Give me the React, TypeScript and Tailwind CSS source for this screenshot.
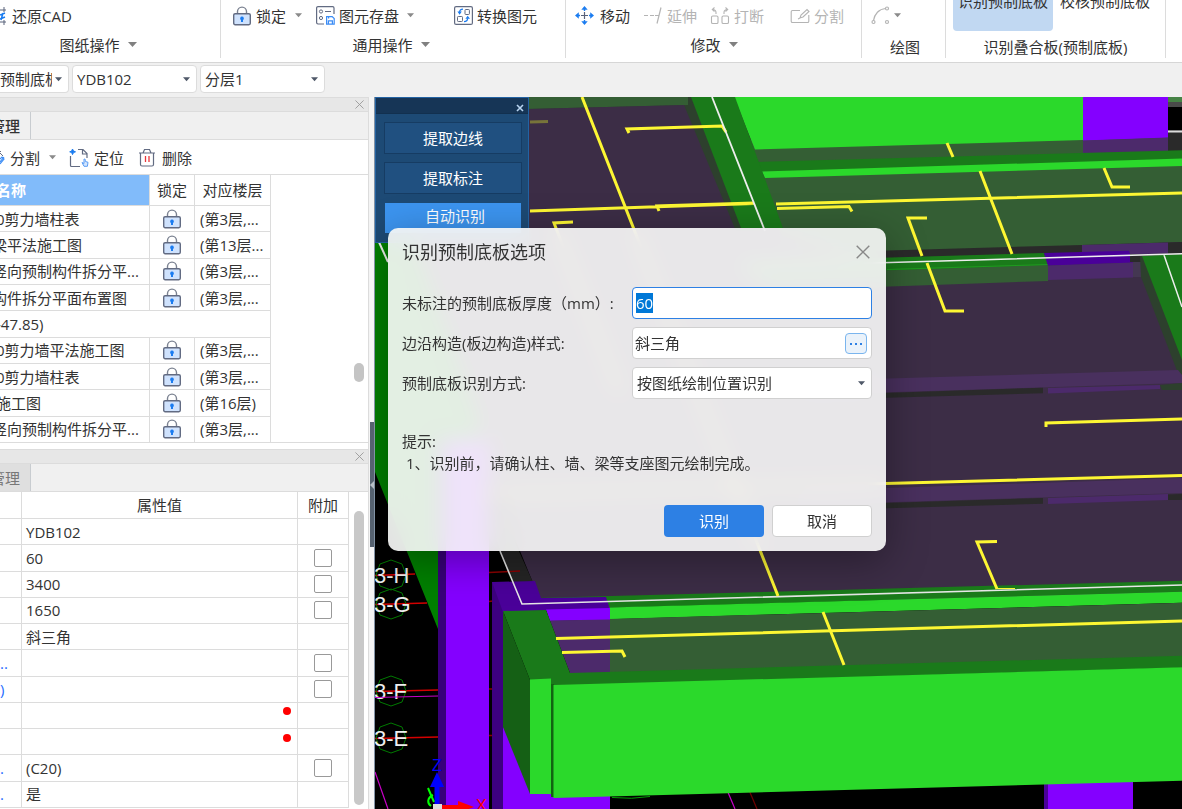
import { useEffect, useRef } from "react";
import type { ReactNode } from "react";

type IconProps = {
    className?: string;
};

const Caret = ({ className = "text-[#8a8a8a]" }: IconProps) => (
    <svg viewBox="0 0 8 5" className={`w-[7px] h-[5px] shrink-0 ${className}`}>
        <path d="M0 0h8L4 4.6z" fill="currentColor" />
    </svg>
);

const Close = ({ className = "w-[9px] h-[9px] text-[#999]" }: IconProps) => (
    <svg viewBox="0 0 10 10" className={className}>
        <path d="M.5.5l9 9M9.5.5l-9 9" stroke="currentColor" fill="none" />
    </svg>
);

const LockIcon = () => (
    <svg viewBox="0 0 18 20" className="w-[18px] h-5 shrink-0" fill="none">
        <path d="M4.5 8V5.6a4.5 4.5 0 0 1 9 0V8" stroke="#7b8291" strokeWidth="1.4" />
        <rect x=".7" y="7.7" width="16.6" height="11" rx="1.4" fill="#cfe2fd" stroke="#626b82" strokeWidth="1.4" />
        <path d="M9 10.6a1.9 1.9 0 0 1 1 3.5V16H8v-1.9a1.9 1.9 0 0 1 1-3.5z" fill="#1b7cf0" />
    </svg>
);

const RestoreIcon = () => (
    <svg viewBox="0 0 7 18" className="w-[7px] h-[18px] shrink-0" fill="none">
        <path d="M0 3h6M4 0v5M0 15h6M4 13v5" stroke="#59627a" />
        <path d="M0 8l5-2M0 12l5-2M3 6L1 13" stroke="#1b7cf0" strokeWidth="1.6" />
    </svg>
);

const SaveGraphIcon = () => (
    <svg viewBox="0 0 19 19" className="w-[19px] h-[19px] shrink-0" fill="none">
        <path d="M18 8V2a1.4 1.4 0 0 0-1.4-1.4H2A1.4 1.4 0 0 0 .6 2v14.6A1.4 1.4 0 0 0 2 18h6" stroke="#626b82" strokeWidth="1.2" />
        <circle cx="5" cy="5.5" r="1.6" stroke="#626b82" />
        <circle cx="5" cy="12" r="1.6" stroke="#626b82" />
        <path d="M9 5.5h6" stroke="#626b82" />
        <path d="M10.6 10.6h5.6l2 2v5.6h-7.6zM12.4 18v-3.2h4V18M12.6 11v1.6" stroke="#3b8cf5" strokeWidth="1.2" />
    </svg>
);

const ConvertIcon = () => (
    <svg viewBox="0 0 19 19" className="w-[19px] h-[19px] shrink-0" fill="none">
        <rect x=".6" y=".6" width="17.8" height="17.8" rx="1.5" stroke="#626b82" strokeWidth="1.2" />
        <rect x="11" y="3.5" width="4.4" height="5" rx=".8" stroke="#626b82" />
        <rect x="3.5" y="10.5" width="5" height="5" rx=".8" stroke="#626b82" />
        <path d="M9 3.2C6.6 3.2 5.6 4.4 5.6 6.4M10 15.6c2.4 0 3.6-1.2 3.6-3.4" stroke="#1b7cf0" strokeWidth="1.3" />
        <path d="M3.4 5.6h4.4L5.6 8.8zM11.4 12.8h4.6L13.7 9.8z" fill="#1b7cf0" />
    </svg>
);

const MoveIcon = () => (
    <svg viewBox="0 0 19 19" className="w-[19px] h-[19px] shrink-0">
        <path d="M9.5 6v7M6 9.5h7" stroke="#59627a" strokeWidth="1.2" />
        <path d="M9.5 2v3M9.5 14v3M2 9.5h3M14 9.5h3" stroke="#1b7cf0" strokeWidth="1.4" />
        <path d="M9.5 0l3.2 3.8H6.3zM9.5 19l3.2-3.8H6.3zM0 9.5l3.8-3.2v6.4zM19 9.5l-3.8-3.2v6.4z" fill="#1b7cf0" />
    </svg>
);

const ExtendIcon = () => (
    <svg viewBox="0 0 20 19" className="w-5 h-[19px] shrink-0">
        <path d="M1 9.5h4M7 9.5h4M12 9.5h4M14 17.5l4-16" stroke="#b4b4b4" strokeWidth="1.2" fill="none" />
    </svg>
);

const BreakIcon = () => (
    <svg viewBox="0 0 20 19" className="w-5 h-[19px] shrink-0" fill="none" stroke="#b4b4b4" strokeWidth="1.1">
        <rect x="1.5" y="10" width="6.5" height="7.5" rx="1.3" />
        <rect x="12" y="10" width="6.5" height="7.5" rx="1.3" />
        <path d="M6 8V6.5C6 4.5 5 3.5 2.5 3.5M4.5 1.5l-2.2 2 2.2 2M14 8V6.5c0-2 1-3 3.5-3M15.500 1.500l2.200 2-2.200 2" />
    </svg>
);

const SplitIcon = () => (
    <svg viewBox="0 0 20 19" className="w-5 h-[19px] shrink-0" fill="none" stroke="#b4b4b4" strokeWidth="1.1">
        <path d="M10 4.5H2.500A1.300 1.300 0 0 0 1.200 5.800v9.400a1.300 1.300 0 0 0 1.300 1.300h15a1.300 1.300 0 0 0 1.300-1.300V9" />
        <path d="M10 12l1-3 6-5.500 2 2-6 5.500zM8 13l2-1" />
    </svg>
);

const ArcIcon = () => (
    <svg viewBox="0 0 19 19" className="w-[19px] h-[19px] shrink-0" fill="none" stroke="#b4b4b4" strokeWidth="1.2">
        <circle cx="2.5" cy="16" r="1.5" />
        <circle cx="16" cy="16" r="1.5" />
        <circle cx="16" cy="2.5" r="1.5" />
        <path d="M2.5 14.5C3.5 8 8 3 14.5 2.5" />
    </svg>
);

const CutIcon = () => (
    <svg viewBox="0 0 5 16" className="w-[5px] h-4 shrink-0" fill="none">
        <path d="M0 3l3 3M0 2l1-1" stroke="#626b82" />
        <path d="M0 12l4-5M0 9l2-2 2 2-4 5" stroke="#3b8cf5" strokeWidth="1.2" />
    </svg>
);

const LocateIcon = () => (
    <svg viewBox="0 0 20 20" className="w-5 h-5 shrink-0" fill="none">
        <path d="M9 1.5h5l4 4V10M13.5 1.5V6H18M1.5 8v9.5a1 1 0 0 0 1 1H11" stroke="#626b82" strokeWidth="1.2" />
        <path d="M3.5 1l1 2 2 .8-2 .8-1 2-.8-2-2-.8 2-.8z" fill="#1b7cf0" stroke="#1b7cf0" />
        <path d="M13 14.5l2 1V11c1.500-.5 1.500 1.500 1.500 2.500l2.500.8-.6 4h-3.400z" fill="#d3e5fd" stroke="#5a9df5" />
    </svg>
);

const TrashIcon = () => (
    <svg viewBox="0 0 17 19" className="w-5 h-[19px] shrink-0" fill="none">
        <path d="M.5 5h16M4.5 5l1.5-3.5h5L12.5 5M2 5v11.500A1.500 1.500 0 0 0 3.500 18h10a1.500 1.500 0 0 0 1.500-1.500V5" stroke="#626b82" strokeWidth="1.2" />
        <path d="M7 8v6M10.500 8v6" stroke="#e8363b" strokeWidth="1.3" />
    </svg>
);

type ToolProps = {
    icon: ReactNode;
    label?: string;
    caret?: boolean;
    disabled?: boolean;
    gap?: string;
};

const Tool = ({ icon, label, caret, disabled, gap = "gap-1" }: ToolProps) => (
    <button type="button" disabled={disabled} className={`flex items-center disabled:text-[#b4b4b4] ${gap}`}>
        {icon}
        {label}
        {caret && <Caret className="ml-1 text-[#8a8a8a]" />}
    </button>
);

type GroupProps = {
    label: string;
    caret?: boolean;
    className: string;
    labelClass?: string;
    children: ReactNode;
};

const Group = ({ label, caret, className, labelClass = "", children }: GroupProps) => (
    <section className={`h-[58px] shrink-0 border-r border-[#dcdcdc] flex flex-col ${className}`}>
        <div className="h-[31px] flex items-center">{children}</div>
        <div className={`flex-1 flex items-center justify-center gap-2 ${labelClass}`}>
            {label}
            {caret && (
                <svg viewBox="0 0 9 5" className="w-[9px] h-[5px]">
                    <path d="M0 0h9L4.5 5z" fill="#808080" />
                </svg>
            )}
        </div>
    </section>
);

const Ribbon = () => (
    <header className="h-[63px] shrink-0 flex border-b border-[#d6d6d6] bg-white">
        <Group label="图纸操作" caret className="w-[221px]" labelClass="pr-6">
            <Tool icon={<RestoreIcon />} label="还原CAD" gap="gap-[5px]" />
        </Group>
        <Group label="通用操作" caret className="w-[345px] pl-3" labelClass="pr-4">
            <div className="flex gap-[14px]">
                <Tool icon={<LockIcon />} label="锁定" caret gap="gap-[5px]" />
                <Tool icon={<SaveGraphIcon />} label="图元存盘" caret />
            </div>
            <div className="ml-10">
                <Tool icon={<ConvertIcon />} label="转换图元" />
            </div>
        </Group>
        <Group label="修改" caret className="w-[296px] pl-[9px]" labelClass="pr-2">
            <div className="flex gap-[13px]">
                <Tool icon={<MoveIcon />} label="移动" gap="gap-[6px]" />
                <Tool icon={<ExtendIcon />} label="延伸" disabled />
                <Tool icon={<BreakIcon />} label="打断" disabled />
            </div>
            <div className="ml-[26px]">
                <Tool icon={<SplitIcon />} label="分割" disabled />
            </div>
        </Group>
        <Group label="绘图" className="w-[84px] pl-[9px]" labelClass="pt-1 pr-[6px]">
            <Tool icon={<ArcIcon />} caret disabled gap="gap-0" />
        </Group>
        <Group label="识别叠合板(预制底板)" className="w-[220px] px-[7px]" labelClass="pt-1">
            <div className="flex gap-[7px] h-full">
                <button type="button" className="w-[100px] rounded-b bg-[#c1d8f2] pb-[25px] flex items-end justify-center whitespace-nowrap">
                    <span className="h-4 leading-[22px]">识别预制底板</span>
                </button>
                <button type="button" className="pb-[25px] flex items-end whitespace-nowrap">
                    <span className="h-4 leading-[22px]">校核预制底板</span>
                </button>
            </div>
        </Group>
    </header>
);

type ComboProps = {
    name: string;
    value: string;
    className: string;
    selectClass?: string;
};

const Combo = ({ name, value, className, selectClass = "pl-1" }: ComboProps) => (
    <div className={`relative flex items-center bg-white border border-[#dcdcdc] rounded ${className}`}>
        <select aria-label={name} className={`appearance-none w-full h-full pr-4 bg-transparent outline-none ${selectClass}`}>
            <option>{value}</option>
        </select>
        <Caret className="absolute right-[6px] pointer-events-none text-[#4f5868]" />
    </div>
);

const SelectorBar = () => (
    <div className="h-[34px] shrink-0 flex items-center gap-[3px] pb-[2px] bg-[#f0f0f0]">
        <Combo name="构件类型" value="预制底板" className="w-[69px] h-7 rounded-l-none border-l-0" selectClass="pl-0" />
        <Combo name="构件" value="YDB102" className="w-[125px] h-7" />
        <Combo name="分层" value="分层1" className="w-[125px] h-7" />
    </div>
);

const PanelHead = ({ active }: { active?: boolean }) => (
    <>
        <div className="h-[15px] shrink-0 flex items-center justify-end pr-1 bg-[#e7e7e7] border-y border-[#dcdcdc]">
            <button type="button" aria-label="关闭">
                <Close />
            </button>
        </div>
        <div className="h-7 shrink-0 flex bg-[#f0f0f0] border-b border-[#dcdcdc]">
            <button
                type="button"
                className={`w-[31px] flex items-center justify-end pr-[10px] whitespace-nowrap overflow-hidden border-r ${
                    active ? "font-medium border-[#c8ccd0]" : "bg-[#dfdfdf] text-[#777] border-[#c8ccd0]"
                }`}
            >
                管理
            </button>
        </div>
    </>
);

const drawings = [
    { name: "0剪力墙柱表", floor: "(第3层,...", indent: "-indent-1" },
    { name: "梁平法施工图", floor: "(第13层...", indent: "-indent-2" },
    { name: "竖向预制构件拆分平...", floor: "(第3层,...", indent: "-indent-2" },
    { name: "构件拆分平面布置图", floor: "(第3层,...", indent: "-indent-2" },
    { name: "-47.85)", floor: "", indent: "-indent-1" },
    { name: "0剪力墙平法施工图", floor: "(第3层,...", indent: "-indent-1" },
    { name: "0剪力墙柱表", floor: "(第3层,...", indent: "-indent-1" },
    { name: "施工图", floor: "(第16层)", indent: "-indent-1" },
    { name: "竖向预制构件拆分平...", floor: "(第3层,...", indent: "-indent-2" },
];

const DrawingPanel = () => (
    <section className="h-[346px] shrink-0 flex flex-col border-b border-[#dcdcdc]">
        <PanelHead active />
        <div className="h-[35px] shrink-0 flex items-center gap-[13px] pt-px border-b border-[#dcdcdc]">
            <Tool icon={<CutIcon />} label="分割" caret gap="gap-[5px]" />
            <Tool icon={<LocateIcon />} label="定位" gap="gap-[5px]" />
            <Tool icon={<TrashIcon />} label="删除" gap="gap-[5px]" />
        </div>
        <div className="flex-1 flex justify-between overflow-hidden">
            <table className="w-[271px] h-[268px] table-fixed border-separate border-spacing-0 whitespace-nowrap [&_td]:border-r [&_td]:border-b [&_td]:border-[#dcdcdc] [&_th]:border-r [&_th]:border-b [&_th]:border-[#dcdcdc]">
                <thead>
                    <tr className="h-[31px]">
                        <th className="w-[150px] p-0 text-left font-bold text-white bg-[#81bbfa] -indent-1">名称</th>
                        <th className="w-[45px] p-0 font-normal">锁定</th>
                        <th className="w-[76px] p-0 font-normal">对应楼层</th>
                    </tr>
                </thead>
                <tbody className="leading-[22px]">
                    {drawings.map((d, i) =>
                        d.floor ? (
                            <tr key={i}>
                                <td className={`p-0 ${d.indent}`}>{d.name}</td>
                                <td className="p-0">
                                    <div className="flex justify-center">
                                        <LockIcon />
                                    </div>
                                </td>
                                <td className="p-0 pl-[5px]">{d.floor}</td>
                            </tr>
                        ) : (
                            <tr key={i}>
                                <td colSpan={3} className={`p-0 ${d.indent}`}>
                                    {d.name}
                                </td>
                            </tr>
                        )
                    )}
                </tbody>
            </table>
            <div className="pr-1 pt-[188px]">
                <div className="w-[10px] h-[19px] rounded-full bg-[#c4c4c4]" />
            </div>
        </div>
    </section>
);

const props = [
    { key: "", value: "YDB102" },
    { key: "", value: "60", check: true },
    { key: "", value: "3400", check: true },
    { key: "", value: "1650", check: true },
    { key: "", value: "斜三角" },
    { key: "...", value: "", check: true },
    { key: ")", value: "", check: true },
    { key: "", value: "", dot: true },
    { key: "", value: "", dot: true },
    { key: ".", value: "(C20)", check: true },
    { key: ".", value: "是" },
];

const PropertyPanel = () => (
    <section className="flex-1 flex flex-col overflow-hidden">
        <PanelHead />
        <div className="flex-1 flex items-start justify-between">
            <table className="w-[349px] h-[316px] table-fixed border-separate border-spacing-0 [&_td]:border-r [&_td]:border-b [&_td]:border-[#dcdcdc] [&_th]:border-r [&_th]:border-b [&_th]:border-[#dcdcdc]">
                <thead>
                    <tr className="h-[27px]">
                        <th className="w-[22px] p-0" aria-label="属性" />
                        <th className="w-[276px] p-0 font-normal">属性值</th>
                        <th className="w-[51px] p-0 font-normal">附加</th>
                    </tr>
                </thead>
                <tbody>
                    {props.map((p, i) => (
                        <tr key={i}>
                            <td className={`p-0 text-[#1f6dff] ${p.key.length > 1 ? "-indent-1" : ""}`}>{p.key}</td>
                            <td className="p-0 px-1">
                                {p.dot ? (
                                    <div className="h-[22px] pt-[3px] pr-[2px] flex items-start justify-end">
                                        <span className="w-2 h-2 rounded-full bg-[#ff0000]" />
                                    </div>
                                ) : (
                                    <div className="h-[22px]">{p.value}</div>
                                )}
                            </td>
                            <td className="p-0">
                                {p.check && (
                                    <input
                                        type="checkbox"
                                        aria-label={`附加 ${p.value}`}
                                        className="appearance-none block mx-auto w-[18px] h-[18px] border border-[#999] rounded-[2px] bg-white"
                                    />
                                )}
                            </td>
                        </tr>
                    ))}
                </tbody>
            </table>
            <div className="pr-1 pt-[19px]">
                <div className="w-[10px] h-[294px] rounded-full bg-[#c8c8c8]" />
            </div>
        </div>
    </section>
);

const axes = [
    { label: "3-H", y: 575, end: 415 },
    { label: "3-G", y: 604, end: 427 },
    { label: "3-F", y: 691, end: 438 },
    { label: "3-E", y: 738, end: 438 },
];

// Model view: slabs, beams and columns drawn back to front
const Scene = () => (
    <svg className="absolute inset-0 w-full h-full" viewBox="375 97 807 712" preserveAspectRatio="xMinYMin slice" fill="none">
        <rect x="375" y="97" width="807" height="712" fill="#000" />
        {axes.map((a) => (
            <g key={a.label}>
                <path d={`M375 ${a.y}.5L${a.end} ${a.y - 1}`} stroke="#d40000" strokeWidth="1.5" />
                <path d={`M391 ${a.y - 15}l11 4 4 11-4 11-11 4-11-4-4-11 4-11z`} stroke="#007a00" />
                <text x="374" y={a.y + 8} fontSize="22" fill="#eee" fontFamily="Liberation Sans, sans-serif">
                    {a.label}
                </text>
            </g>
        ))}
        <path d="M375 697.5l63-1.5M375 772l13 37M727 790l8 19" stroke="#c800c8" strokeWidth="1.2" />
        <path d="M749 790l8 19" stroke="#700000" strokeWidth="1.2" />

        {/* slab field */}
        <path d="M405 228H1182V600H540L430 330z" fill="#3c2d46" />
        <path d="M480 500L522 604 540 598 505 520z" fill="#252525" />
        <rect x="528" y="97" width="232" height="134" fill="#2d402d" />
        <path d="M528 97h160v8l-160 4z" fill="#345e34" />
        <path d="M528 109l156-4 52 126H528z" fill="#3c2d46" />

        {/* upper right bays */}
        <path d="M740 140L1182 130v112l-330 14-70-20z" fill="#345e34" />
        <path d="M734 97h349v43l-328 9.5z" fill="#2bd92b" />
        <path d="M1083 97h85v40.7l-85 3z" fill="#8400ff" />
        <path d="M1083 140.5l85-3v14l-85 2z" fill="#4c2a6b" />
        <path d="M1168 97h14v5h-14z" fill="#468346" />
        <path d="M1168 102h14v5h-14z" fill="#4a4a4a" />
        <path d="M1168 107h14v23h-14z" fill="#000" />
        <path d="M1168 130h14v22h-14z" fill="#2a2a2a" />
        <path d="M1168 131.5h14" stroke="#ddd" strokeWidth="2" />
        <path d="M757 162l425-11.7v8.7L757 172z" fill="#1a7a1a" />
        <path d="M762 171.5l420-13v7.5l-417 12z" fill="#2bd92b" />
        <path d="M691 97h44l48 131H741z" fill="#1a7a1a" />
        <path d="M870 251l212-6 100-3v12L870 259z" fill="#2a2a2a" />
        <path d="M1082 245l86-2.5v11l-86 2z" fill="#4c2a6b" />
        <path d="M760 274l288-10v17l-288 10z" fill="#345e34" />
        <path d="M740 262l304-9 4 12-300 10z" fill="#1a7a1a" />
        <path d="M887 269.5l161-5" stroke="#1f9c1f" />
        <path d="M1044 253l85-2.3 4 12-85 3z" fill="#4a0099" />
        <path d="M1048 265.5l85-3v15l-85 2.5z" fill="#4c2a6b" />
        <path d="M1133 254h12v23h-12z" fill="#443752" />
        <path d="M1130 254h52v8h-52z" fill="#2a2a2a" />
        <path d="M1140 256l6 0 36 100v20h-3L1141 277z" fill="#2d402d" />
        <path d="M1142 256l40-2v106z" fill="#1a7a1a" />
        <path d="M740 267l442-13.3M1164 255l18 52" stroke="#eee" strokeWidth="1.5" />

        {/* slab joints */}
        <path d="M800 381l378-11 4 5v8l-382 12z" fill="#49305e" />
        <path d="M870 393.5l173-5.8v5.5l-173 5z" fill="#2a2a2a" />
        <path d="M1048 388l112-3v4l-112 4.5z" fill="#4c2a6b" />
        <path d="M1160 385l22-2v7h-20z" fill="#2d402d" />
        <path d="M800 491l382-13v15l-382 12z" fill="#49305e" />
        <path d="M870 503.5l173-5.5v5.7l-173 5zM1168 494.5l14-.5v6h-14z" fill="#2a2a2a" />
        <path d="M1048 498l120-4v6l-120 4z" fill="#4c2a6b" />

        {/* left beam */}
        <path d="M375 228h35l68 190v85l-20 20-20-10v116L375 472z" fill="#008000" />
        <path d="M378 240l10 22" stroke="#eee" strokeWidth="2" />

        {/* bottom beam, inner side */}
        <path d="M535 598l647-17.3v11L600 608z" fill="#1a7a1a" />
        <path d="M600 607.7l582-16v11L600 619.5z" fill="#2bd92b" />
        <path d="M600 619.3l582-16.6v54L600 673z" fill="#345e34" />

        {/* columns */}
        <path d="M438 440h8v369h-8z" fill="#38007a" />
        <path d="M446 440h43v369h-43z" fill="#8400ff" />
        <path d="M489 572.5l31-1.5M489 601.5l4-.5M489 689h3M489 735.5h3" stroke="#8c0000" strokeWidth="1.3" />
        <path d="M492 582h12v227h-12z" fill="#3d0080" />
        <path d="M492 582l43-1 6 17 65-1 4 12-107 3z" fill="#4a0099" />
        <path d="M503 727v82h107v-14z" fill="#8400ff" />
        <path d="M546 609.5l64-1.5v12l-60 1z" fill="#8400ff" />
        <path d="M550 620.5l60-1V673h-40z" fill="#4c2a6b" />
        <path d="M1044 782h4v27h-4z" fill="#4a0099" />
        <path d="M1048 780h85v29h-85z" fill="#8400ff" />

        {/* front beam */}
        <path d="M503 611l43-1 24 63 612-17.3v12L553 686l-23-6z" fill="#1a7a1a" />
        <path d="M503 611l27 69v114l-27-67z" fill="#156015" />
        <path d="M530 679.5l21-1V794h-21z" fill="#2bd92b" />
        <path d="M551 684h3v113h-3z" fill="#126412" />
        <path d="M553.5 685L1182 667.3v113.4L553.5 798z" fill="#2bd92b" />
        <path d="M612 797.5q20 2 38-1" stroke="#00a000" />
        <path d="M500 551l22 53 660-19" stroke="#e6e6e6" strokeWidth="1.6" />

        {/* rebar */}
        <g stroke="#fdf733" strokeWidth="3">
            <path d="M582 97l196 499M823 612l21 53M947 143l6 14M980 171l32 83" />
            <path d="M629 133l-2-4 95-3 4 6M530 211l224-7.5M659 211l-2-5 97-3M776 204l406-11M777 208.5l72-2 3 5" />
            <path d="M573 222l-19 1 66 170M1104 168l8 19h18M927 218h-19l14 38M927 263l18 48h19" />
            <path d="M1182 419l-136 4v4M997 541.5l-20 .5 20 47M480 494.5l702-19" />
            <path d="M556 638.5L1182 621M562 652.5l60-1.5 3 6" />
            <path d="M997 588.5h18" strokeWidth="1" />
        </g>
        <path d="M712 97l53 134" stroke="#eee" strokeWidth="1.8" />
        <path d="M530 122l18-.5" stroke="#77743a" strokeWidth="3" />

        {/* axis gizmo */}
        <path d="M437 804v-22" stroke="#00f" strokeWidth="5" />
        <path d="M430 787l7-15 7 15z" fill="#00f" />
        <path d="M428 788l6 14M433 795c-6 3-6 8-2 11" stroke="#0f0" strokeWidth="2" />
        <path d="M442 807h18" stroke="#f00" strokeWidth="4" />
        <path d="M458 801l16 6-16 6z" fill="#f00" />
        <path d="M433 804h9v5h-9z" fill="#ddd" />
        <text x="432" y="771" fontSize="16" fill="#00f" fontFamily="Liberation Sans, sans-serif">
            Z
        </text>
        <text x="476" y="811" fontSize="16" fill="#f00" fontFamily="Liberation Sans, sans-serif">
            X
        </text>
    </svg>
);

const ToolPalette = () => (
    <aside className="absolute left-0 top-0 w-[154px] border border-[#2363a3] bg-[#1d4a75] text-white">
        <div className="h-4 flex items-center justify-end pr-1 pt-1 bg-[#163556] border-b border-[#12304f]">
            <button type="button" aria-label="关闭">
                <svg viewBox="0 0 8 8" className="w-2 h-2">
                    <path d="M1 1l6 6M7 1L1 7" stroke="#b8d4f0" strokeWidth="1.6" />
                </svg>
            </button>
        </div>
        <div className="flex flex-col gap-2 p-2 pr-[6px]">
            <button type="button" className="h-8 border border-[#163c63] bg-[#205080]">
                提取边线
            </button>
            <button type="button" className="h-8 border border-[#163c63] bg-[#205080]">
                提取标注
            </button>
            <button type="button" className="h-8 border border-[#1d4a75] bg-[#3c94ef] pl-1 pb-1">
                自动识别
            </button>
        </div>
    </aside>
);

const OptionsDialog = () => {
    const thickness = useRef<HTMLInputElement>(null);

    useEffect(() => {
        thickness.current?.focus();
        thickness.current?.select();
    }, []);

    return (
        <form
            role="dialog"
            aria-labelledby="dlg-title"
            className="absolute left-[13px] top-[131px] w-[498px] px-[14px] pb-[14px] rounded-[10px] bg-[#fafafa]/91 backdrop-blur-[10px] shadow-[0_10px_40px_rgba(0,0,0,0.35)]"
        >
            <div className="h-12 flex items-center justify-between">
                <h2 id="dlg-title" className="text-[18px]">
                    识别预制底板选项
                </h2>
                <button type="button" aria-label="关闭" className="mr-[2px]">
                    <Close className="w-[14px] h-[14px] text-[#888]" />
                </button>
            </div>
            <div className="mt-[11px] grid grid-cols-[1fr_240px] gap-y-2 items-center">
                <label htmlFor="thickness">未标注的预制底板厚度（mm）:</label>
                <input
                    id="thickness"
                    ref={thickness}
                    defaultValue="60"
                    className="h-8 px-[3px] rounded border border-[#2d80e4] bg-white outline-none selection:bg-[#0078d7] selection:text-white"
                />
                <label htmlFor="edge">边沿构造(板边构造)样式:</label>
                <div className="h-8 flex items-center pl-[2px] pr-1 rounded border border-[#d0d0d0] bg-white">
                    <input id="edge" defaultValue="斜三角" className="flex-1 min-w-0 bg-transparent outline-none" />
                    <button
                        type="button"
                        aria-label="更多"
                        className="w-[22px] h-[21px] flex items-center justify-center gap-[3px] pt-[2px] rounded border border-[#7ab5ee] bg-[#eaf2fa]"
                    >
                        <i className="w-[2px] h-[2px] bg-[#2d80e4]" />
                        <i className="w-[2px] h-[2px] bg-[#2d80e4]" />
                        <i className="w-[2px] h-[2px] bg-[#2d80e4]" />
                    </button>
                </div>
                <label htmlFor="mode">预制底板识别方式:</label>
                <div className="relative h-8 flex items-center rounded border border-[#d0d0d0] bg-white">
                    <select id="mode" className="appearance-none w-full h-full pl-1 bg-transparent outline-none">
                        <option>按图纸绘制位置识别</option>
                    </select>
                    <Caret className="absolute right-[6px] pointer-events-none text-[#4f5868]" />
                </div>
            </div>
            <div className="mt-[31px] leading-[22px]">
                <p>提示:</p>
                <p className="pl-1">1、识别前，请确认柱、墙、梁等支座图元绘制完成。</p>
            </div>
            <div className="mt-[31px] flex justify-end gap-2">
                <button type="submit" className="w-[100px] h-8 rounded bg-[#2d80e4] text-white">
                    识别
                </button>
                <button type="button" className="w-[100px] h-8 rounded border border-[#d0d0d0] bg-white">
                    取消
                </button>
            </div>
        </form>
    );
};

const App = () => {
    return (
        <div className="h-screen flex flex-col overflow-hidden bg-white text-[15px] leading-[22px] text-[#333] font-['Open_Sans','Noto_Sans_CJK_SC',sans-serif]">
            <Ribbon />
            <SelectorBar />
            <main className="flex-1 flex min-h-0">
                <div className="w-[369px] shrink-0 flex flex-col gap-[6px] border-r border-[#dcdcdc]">
                    <DrawingPanel />
                    <PropertyPanel />
                </div>
                <div className="w-[6px] shrink-0 pt-[325px] pl-px bg-[#f4f4f4] border-r border-[#8292a4]">
                    <button type="button" aria-label="折叠" className="w-full h-[125px] flex items-center bg-[#566270]">
                        <svg viewBox="0 0 4 8" className="w-1 h-2">
                            <path d="M4 0v8L0 4z" fill="#b8bec6" />
                        </svg>
                    </button>
                </div>
                <div className="relative flex-1 overflow-hidden">
                    <Scene />
                    <ToolPalette />
                    <OptionsDialog />
                </div>
            </main>
        </div>
    );
};

export default App;
